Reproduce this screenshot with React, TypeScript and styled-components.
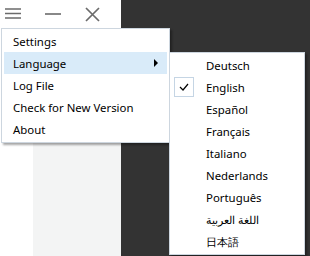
import styled, { createGlobalStyle } from 'styled-components';

const Global = createGlobalStyle`
  html, body {
    margin: 0;
    padding: 0;
    background: #333333;
  }
  body {
    font-family: "Noto Sans", "Open Sans", sans-serif;
    font-size: 11.4px;
    color: #000;
  }
`;

const Screen = styled.div`
  position: relative;
  width: 310px;
  height: 256px;
  display: grid;
  grid-template-columns: 121px 1fr;
  overflow: hidden;
`;

const Panel = styled.div`
  display: flex;
  flex-direction: column;
  background: #ffffff;
`;

const TitleBar = styled.div`
  height: 28px;
  display: flex;
  align-items: center;
  gap: 19.5px;
  padding-left: 3px;
`;

const IconButton = styled.div`
  width: 20px;
  height: 24px;
  display: flex;
  align-items: center;
  justify-content: center;
`;

const PanelBody = styled.div`
  flex: 1;
  display: grid;
  grid-template-columns: 33px 1fr;
`;

const Shade = styled.div`
  background: #f3f4f4;
`;

const Dark = styled.div`
  background: #333333;
`;

const Menu = styled.div<{ $left: number; $top: number; $width: number }>`
  position: absolute;
  left: ${(p) => p.$left}px;
  top: ${(p) => p.$top}px;
  width: ${(p) => p.$width}px;
  box-sizing: border-box;
  background: #ffffff;
  border: 1px solid #cdd6df;
  padding: 1px 1px 2px;
  box-shadow: 2px 2px 2px rgba(0, 0, 0, 0.35);
  display: flex;
  flex-direction: column;
`;

const Item = styled.div<{ $active?: boolean; $indent: number }>`
  position: relative;
  box-sizing: border-box;
  height: 22px;
  display: flex;
  align-items: center;
  padding-left: ${(p) => p.$indent}px;
  padding-top: 1px;
  margin: 0 1px;
  background: ${(p) => (p.$active ? '#d9ebf9' : 'transparent')};
  white-space: nowrap;
  line-height: 1;
`;

const Arrow = styled.span`
  position: absolute;
  right: 9px;
  top: 7px;
  width: 0;
  height: 0;
  border-top: 4px solid transparent;
  border-bottom: 4px solid transparent;
  border-left: 4px solid #000;
`;

const CheckBox = styled.span`
  position: absolute;
  left: 2px;
  top: 1px;
  width: 20px;
  height: 20px;
  box-sizing: border-box;
  border: 1px solid #c5d5e4;
  display: flex;
  align-items: center;
  justify-content: center;
`;

const mainItems = ['Settings', 'Language', 'Log File', 'Check for New Version', 'About'];
const languages = [
  'Deutsch',
  'English',
  'Español',
  'Français',
  'Italiano',
  'Nederlands',
  'Português',
  'اللغة العربية',
  '日本語',
];

export default function App() {
  return (
    <>
      <Global />
      <Screen>
        <Panel>
          <TitleBar>
            <IconButton>
              <svg width="16" height="12" viewBox="0 0 16 12">
                <path d="M0 1h16M0 5.5h16M0 10h16" stroke="#6b6b6b" strokeWidth="1.6" />
              </svg>
            </IconButton>
            <IconButton>
              <svg width="16" height="4" viewBox="0 0 16 4">
                <path d="M0 2h16" stroke="#6b6b6b" strokeWidth="1.6" />
              </svg>
            </IconButton>
            <IconButton>
              <svg width="15" height="15" viewBox="0 0 15 15">
                <path d="M1 1l13 13M14 1L1 14" stroke="#6b6b6b" strokeWidth="1.7" />
              </svg>
            </IconButton>
          </TitleBar>
          <PanelBody>
            <div />
            <Shade />
          </PanelBody>
        </Panel>
        <Dark />

        <Menu $left={1} $top={28} $width={169}>
          {mainItems.map((label) => (
            <Item key={label} $indent={9} $active={label === 'Language'}>
              {label}
              {label === 'Language' && <Arrow />}
            </Item>
          ))}
        </Menu>

        <Menu $left={169} $top={52} $width={136}>
          {languages.map((lang) => (
            <Item key={lang} $indent={34}>
              {lang === 'English' && (
                <CheckBox>
                  <svg width="10" height="8" viewBox="0 0 10 8">
                    <path d="M1 4l3 3 5-6" fill="none" stroke="#000" strokeWidth="1.2" />
                  </svg>
                </CheckBox>
              )}
              {lang}
            </Item>
          ))}
        </Menu>
      </Screen>
    </>
  );
}
